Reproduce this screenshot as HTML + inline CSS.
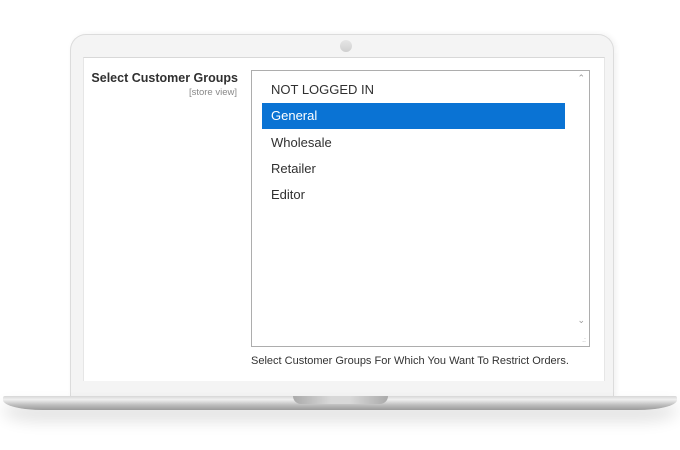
<!DOCTYPE html>
<html><head><style>
body{margin:0;width:680px;height:450px;background:#fff;position:relative;overflow:hidden;font-family:"Liberation Sans",sans-serif}
.lid{position:absolute;left:70px;top:34px;width:542px;height:362px;background:#f4f4f4;border:1px solid #dcdcdc;border-bottom:none;border-radius:16px 16px 0 0;box-shadow:2px 0 6px rgba(0,0,0,.06)}
.cam{position:absolute;left:340px;top:40px;width:12px;height:12px;border-radius:50%;background:linear-gradient(#e6e6e6,#cfcfcf)}
.screen{position:absolute;left:83px;top:57px;width:520px;height:323px;background:#fff;border-top:1px solid #d8d8d8;border-left:1px solid #e6e6e6;border-right:1px solid #e6e6e6}
.lbl{position:absolute;right:442px;top:71px;font-size:12.5px;font-weight:bold;color:#303030;white-space:nowrap}
.sv{position:absolute;right:443px;top:87px;font-size:9.5px;color:#888}
.sel{position:absolute;left:251px;top:70px;width:337px;height:275px;border:1px solid #adadad;background:#fff}
.it{position:absolute;left:19px;font-size:13px;color:#303030}
.hl{position:absolute;left:10px;top:32px;width:303px;height:26px;background:#0a73d4}
.help{position:absolute;left:251px;top:355px;font-size:11px;color:#333}
.base{position:absolute;left:3px;top:396px;width:674px;height:14px;background:linear-gradient(#d6d6d6,#f0f0f0 25%,#bdbdbd 65%,#9a9a9a);border-radius:2px 2px 40px 40px/2px 2px 10px 10px;box-shadow:0 10px 16px rgba(0,0,0,.14)}
.notch{position:absolute;left:293px;top:396px;width:95px;height:8px;background:linear-gradient(90deg,#aaa,#d8d8d8 40%,#d8d8d8 60%,#aaa);border-radius:0 0 8px 8px}
</style></head><body>
<div class="lid"></div>
<div class="cam"></div>
<div class="screen"></div>
<div class="lbl">Select Customer Groups</div>
<div class="sv">[store view]</div>
<div class="sel">
<div class="hl"></div>
<div class="it" style="top:11px">NOT LOGGED IN</div>
<div class="it" style="top:37px;color:#fff">General</div>
<div class="it" style="top:64px">Wholesale</div>
<div class="it" style="top:90px">Retailer</div>
<div class="it" style="top:116px">Editor</div>
<div style="position:absolute;right:4px;top:2px;font-size:9px;color:#999">&#8963;</div>
<div style="position:absolute;right:4px;top:244px;font-size:9px;color:#999">&#8964;</div>
<div style="position:absolute;right:3px;bottom:2px;font-size:7px;color:#aaa">.:</div>
</div>
<div class="help">Select Customer Groups For Which You Want To Restrict Orders.</div>
<div class="base"></div>
<div class="notch"></div>
</body></html>
